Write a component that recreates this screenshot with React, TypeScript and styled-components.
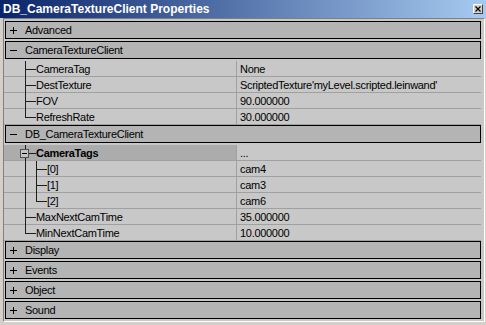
import styled, { createGlobalStyle } from 'styled-components';

type Guide = 'pipe' | 'tee' | 'elbow' | 'blank';

type Prop = {
  guides: Guide[];
  name: string;
  value: string;
  header?: boolean;
};

type Section = {
  name: string;
  rows?: Prop[];
};

const sections: Section[] = [
  { name: 'Advanced' },
  {
    name: 'CameraTextureClient',
    rows: [
      { guides: ['tee'], name: 'CameraTag', value: 'None' },
      { guides: ['tee'], name: 'DestTexture', value: "ScriptedTexture'myLevel.scripted.leinwand'" },
      { guides: ['tee'], name: 'FOV', value: '90.000000' },
      { guides: ['elbow'], name: 'RefreshRate', value: '30.000000' },
    ],
  },
  {
    name: 'DB_CameraTextureClient',
    rows: [
      { guides: ['tee'], name: 'CameraTags', value: '...', header: true },
      { guides: ['pipe', 'tee'], name: '[0]', value: 'cam4' },
      { guides: ['pipe', 'tee'], name: '[1]', value: 'cam3' },
      { guides: ['pipe', 'elbow'], name: '[2]', value: 'cam6' },
      { guides: ['tee'], name: 'MaxNextCamTime', value: '35.000000' },
      { guides: ['elbow'], name: 'MinNextCamTime', value: '10.000000' },
    ],
  },
  { name: 'Display' },
  { name: 'Events' },
  { name: 'Object' },
  { name: 'Sound' },
];

const GlobalStyle = createGlobalStyle`
  html, body {
    margin: 0;
    padding: 0;
    background: #d4d0c8;
  }
  body {
    font-family: "Liberation Sans", Arial, sans-serif;
    font-size: 11px;
    color: #000;
  }
`;

const Window = styled.div`
  width: 486px;
  height: 325px;
  display: flex;
  flex-direction: column;
  background: #d4d0c8;
  overflow: hidden;
`;

const TitleBar = styled.div`
  height: 18px;
  flex: none;
  display: flex;
  align-items: center;
  justify-content: space-between;
  padding: 0 3px;
  background: linear-gradient(to right, #0a246a, #a6caf0);
  color: #fff;
  font-weight: bold;
  font-size: 12px;
`;

const CloseButton = styled.div`
  width: 10px;
  height: 10px;
  box-sizing: border-box;
  background: #d4d0c8;
  border-style: solid;
  border-width: 1px;
  border-color: #fff #404040 #404040 #fff;
  display: flex;
  align-items: center;
  justify-content: center;
`;

const Panel = styled.div`
  flex: 1;
  margin: 0 1px 3px 3px;
  border-style: solid;
  border-width: 1px;
  border-color: #808080 #fff #fff #808080;
  background: #c8c8c8;
  padding-right: 3px;
  display: flex;
  flex-direction: column;
`;

const Category = styled.div`
  margin: 2px 0 0 1px;
  height: 18px;
  flex: none;
  box-sizing: border-box;
  border: 1px solid #000;
  background: #b4b4b4;
  display: flex;
  align-items: center;
  gap: 8px;
  padding-left: 4px;
  letter-spacing: -0.3px;
`;

const Group = styled.div`
  padding-top: 2px;
  margin-bottom: -2px;
  display: flex;
  flex-direction: column;
`;

const Row = styled.div`
  height: 16px;
  display: flex;
  letter-spacing: -0.3px;
`;

const NameCell = styled.div<{ $header?: boolean }>`
  width: 233px;
  flex: none;
  box-sizing: border-box;
  padding-left: 21px;
  border-right: 1px solid #a0a0a0;
  display: flex;
  align-items: center;
  background: linear-gradient(to top, #a0a0a0 1px, ${(p) => (p.$header ? '#acacac' : '#c8c8c8')} 1px);
  font-weight: ${(p) => (p.$header ? 'bold' : 'normal')};
`;

const ValueCell = styled.div`
  flex: 1;
  padding: 0 0 1px 3px;
  display: flex;
  align-items: center;
  white-space: nowrap;
  background: linear-gradient(to top, #a0a0a0 1px, #c8c8c8 1px);
`;

const line = 'linear-gradient(#1e1e1e, #1e1e1e)';

const guideBg: Record<Guide, string> = {
  pipe: `${line} 0 0 / 1px 100% no-repeat`,
  tee: `${line} 0 0 / 1px 100% no-repeat, ${line} 0 8px / 11px 1px no-repeat`,
  elbow: `${line} 0 0 / 1px 9px no-repeat, ${line} 0 8px / 11px 1px no-repeat`,
  blank: 'none',
};

const GuideCell = styled.span<{ $kind: Guide }>`
  width: 11px;
  height: 16px;
  flex: none;
  position: relative;
  align-self: flex-start;
  background: ${(p) => guideBg[p.$kind]};
`;

const Expander = styled.span`
  position: absolute;
  left: -5px;
  top: 4px;
  width: 9px;
  height: 9px;
  box-sizing: border-box;
  border: 1px solid #505050;
  background: #c4c4c4;
  display: flex;
  align-items: center;
  justify-content: center;
  &::after {
    content: '';
    width: 5px;
    height: 1px;
    background: #000;
  }
`;

const Label = styled.span`
  padding-bottom: 1px;
  white-space: nowrap;
`;

function ToggleGlyph({ open }: { open: boolean }) {
  return (
    <svg width="7" height="7" viewBox="0 0 7 7" style={{ flex: 'none' }}>
      <rect x="0" y="3" width="7" height="1" fill="#000" />
      {!open && <rect x="3" y="0" width="1" height="7" fill="#000" />}
    </svg>
  );
}

export default function App() {
  return (
    <>
      <GlobalStyle />
      <Window>
        <TitleBar>
          <span>DB_CameraTextureClient Properties</span>
          <CloseButton>
            <svg width="6" height="6" viewBox="0 0 6 6">
              <path d="M0.5 0.5 L5.5 5.5 M5.5 0.5 L0.5 5.5" stroke="#000" strokeWidth="1.2" />
            </svg>
          </CloseButton>
        </TitleBar>
        <Panel>
          {sections.map((s) => (
            <div key={s.name} style={{ display: 'contents' }}>
              <Category>
                <ToggleGlyph open={!!s.rows} />
                <span>{s.name}</span>
              </Category>
              {s.rows && (
                <Group>
                  {s.rows.map((r) => (
                    <Row key={r.name}>
                      <NameCell $header={r.header}>
                        {r.guides.map((g, i) => (
                          <GuideCell key={i} $kind={g}>
                            {r.header && <Expander />}
                          </GuideCell>
                        ))}
                        <Label>{r.name}</Label>
                      </NameCell>
                      <ValueCell>{r.value}</ValueCell>
                    </Row>
                  ))}
                </Group>
              )}
            </div>
          ))}
        </Panel>
      </Window>
    </>
  );
}
